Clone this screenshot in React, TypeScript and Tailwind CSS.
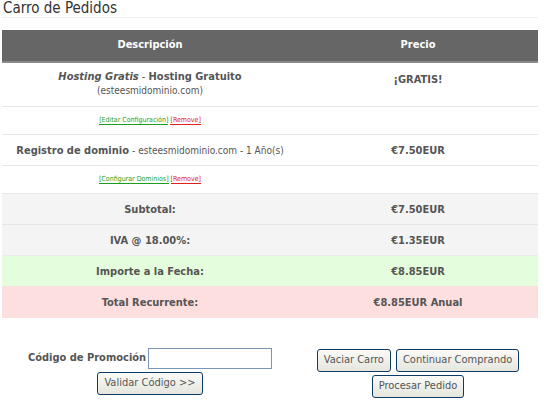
import React from "react"

const font = { fontFamily: '"DejaVu Sans Condensed", "DejaVu Sans", sans-serif' }

function Btn({ children }: { children: React.ReactNode }) {
  return (
    <button className="h-[23px] px-[6px] rounded-[3px] border border-[#0d3b66] bg-gradient-to-b from-[#fafaf7] to-[#e6e6df] text-[11px] text-[#555]">
      {children}
    </button>
  )
}

function Links({ edit }: { edit: string }) {
  return (
    <div className="text-[7px] leading-none">
      <span className="text-[#1ca01c] border-b border-[#1ca01c]">[{edit}]</span>{" "}
      <span className="text-[#e0201c] border-b border-[#e0201c]">[Remove]</span>
    </div>
  )
}

export default function App() {
  return (
    <div className="w-[544px] h-[401px] bg-white text-[#555] overflow-hidden" style={font}>
      <div className="px-[2px] pr-[6px]">
        <h1 className="text-[15px] leading-[16px] text-[#333] pl-[1px] pb-[1px] border-b border-[#eee]">
          Carro de Pedidos
        </h1>

        <table className="w-[536px] mt-[12px] border-collapse text-[11px]">
          <thead>
            <tr className="bg-[#666] text-white h-[32px] border-b-2 border-[#8a8a8a]">
              <th className="w-[296px] font-bold">Descripción</th>
              <th className="font-bold">Precio</th>
            </tr>
          </thead>
          <tbody>
            <tr className="h-[44px] border-b border-[#e8e8e8]">
              <td className="text-center leading-[14px] pt-[3px]">
                <div>
                  <b><i>Hosting Gratis</i></b> - <b>Hosting Gratuito</b>
                </div>
                <div className="text-[10px]">(esteesmidominio.com)</div>
                <div className="h-[3px]" />
              </td>
              <td className="text-center align-top pt-[9px] font-bold">¡GRATIS!</td>
            </tr>
            <tr className="h-[28px] border-b border-[#e8e8e8]">
              <td className="text-center">
                <Links edit="Editar Configuración" />
              </td>
              <td />
            </tr>
            <tr className="h-[31px] border-b border-[#e8e8e8]">
              <td className="text-center pt-[3px]">
                <b>Registro de dominio</b> <span className="text-[10px]">- esteesmidominio.com - 1 Año(s)</span>
              </td>
              <td className="text-center font-bold pt-[3px]">€7.50EUR</td>
            </tr>
            <tr className="h-[28px] border-b border-[#e8e8e8]">
              <td className="text-center">
                <Links edit="Configurar Dominios" />
              </td>
              <td />
            </tr>
            <tr className="h-[31px] bg-[#f4f4f4] border-b border-[#e6e6e6] font-bold">
              <td className="text-center pt-[3px]">Subtotal:</td>
              <td className="text-center pt-[3px]">€7.50EUR</td>
            </tr>
            <tr className="h-[31px] bg-[#f4f4f4] border-b border-[#eaeaea] font-bold">
              <td className="text-center pt-[3px]">IVA @ 18.00%:</td>
              <td className="text-center pt-[3px]">€1.35EUR</td>
            </tr>
            <tr className="h-[31px] bg-[#e4fddc] font-bold">
              <td className="text-center pt-[2px]">Importe a la Fecha:</td>
              <td className="text-center pt-[2px]">€8.85EUR</td>
            </tr>
            <tr className="h-[32px] bg-[#fedfdf] font-bold">
              <td className="text-center pt-[2px]">Total Recurrente:</td>
              <td className="text-center pt-[2px]">€8.85EUR Anual</td>
            </tr>
          </tbody>
        </table>

        <div className="flex w-[536px] mt-[30px] text-[11px]">
          <div className="w-[296px] flex flex-col items-center gap-[3px]">
            <div className="flex items-center gap-[2px]">
              <span className="font-bold">Código de Promoción</span>
              <input className="w-[124px] h-[21px] border border-[#7a96b4] bg-white" />
            </div>
            <Btn>Validar Código &gt;&gt;</Btn>
          </div>
          <div className="flex-1 flex flex-col items-center gap-[3px] pt-[1px]">
            <div className="flex gap-[5px]">
              <Btn>Vaciar Carro</Btn>
              <Btn>Continuar Comprando</Btn>
            </div>
            <Btn>Procesar Pedido</Btn>
          </div>
        </div>
      </div>
    </div>
  )
}
